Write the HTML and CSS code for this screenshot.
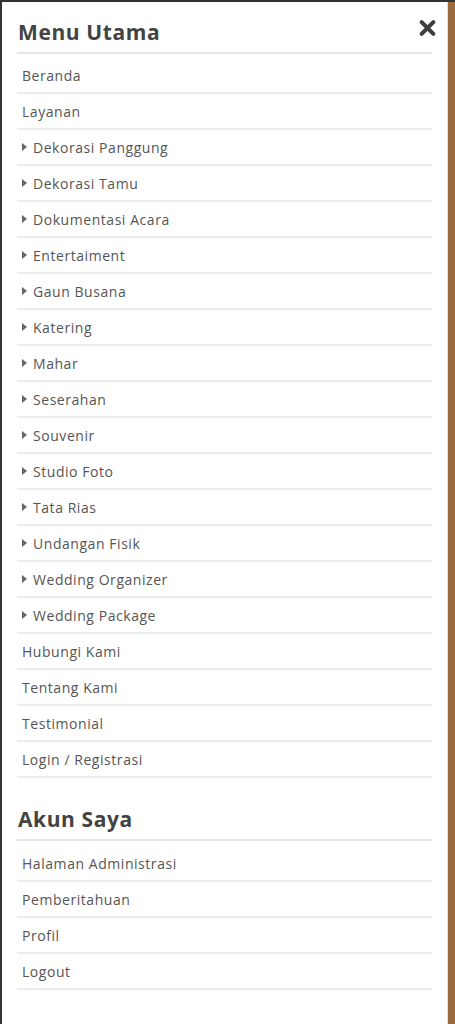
FILE: index.html
```html
<!DOCTYPE html>
<html lang="id">
<head>
<meta charset="utf-8">
<title>Menu</title>
<link rel="stylesheet" href="styles.css">
</head>
<body>
<div class="frame">
  <nav class="panel">
    <button class="close" aria-label="Tutup">
      <svg viewBox="0 0 20 20" width="19" height="18"><path d="M3.5 3.5 L16.5 16.5 M16.5 3.5 L3.5 16.5" stroke="#3d3d3d" stroke-width="4.6" stroke-linecap="round" fill="none"/></svg>
    </button>
    <section class="section">
      <h2 class="title">Menu Utama</h2>
      <ul class="list first">
        <li class="item">Beranda</li>
        <li class="item">Layanan</li>
        <li class="item sub"><span class="tri"></span>Dekorasi Panggung</li>
        <li class="item sub"><span class="tri"></span>Dekorasi Tamu</li>
        <li class="item sub"><span class="tri"></span>Dokumentasi Acara</li>
        <li class="item sub"><span class="tri"></span>Entertaiment</li>
        <li class="item sub"><span class="tri"></span>Gaun Busana</li>
        <li class="item sub"><span class="tri"></span>Katering</li>
        <li class="item sub"><span class="tri"></span>Mahar</li>
        <li class="item sub"><span class="tri"></span>Seserahan</li>
        <li class="item sub"><span class="tri"></span>Souvenir</li>
        <li class="item sub"><span class="tri"></span>Studio Foto</li>
        <li class="item sub"><span class="tri"></span>Tata Rias</li>
        <li class="item sub"><span class="tri"></span>Undangan Fisik</li>
        <li class="item sub"><span class="tri"></span>Wedding Organizer</li>
        <li class="item sub"><span class="tri"></span>Wedding Package</li>
        <li class="item">Hubungi Kami</li>
        <li class="item">Tentang Kami</li>
        <li class="item">Testimonial</li>
        <li class="item">Login / Registrasi</li>
      </ul>
    </section>
    <section class="section second">
      <h2 class="title">Akun Saya</h2>
      <ul class="list">
        <li class="item">Halaman Administrasi</li>
        <li class="item">Pemberitahuan</li>
        <li class="item">Profil</li>
        <li class="item">Logout</li>
      </ul>
    </section>
  </nav>
</div>
</body>
</html>
```
FILE: styles.css
```css
html, body {
  margin: 0;
  padding: 0;
  height: 100%;
}
body {
  background: #9b6a3f;
  font-family: "Open Sans", "Noto Sans", sans-serif;
}
.frame {
  border-top: 2px solid #333;
  min-height: 1022px;
  display: flex;
}
.panel {
  position: relative;
  box-sizing: border-box;
  width: 448px;
  flex: none;
  background: #fff;
  border-left: 2px solid #353535;
  border-right: 1px solid #e9d9cf;
  padding: 15px 15px 0 15px;
}
.close {
  position: absolute;
  top: 17px;
  right: 10px;
  background: none;
  border: 0;
  padding: 0;
  line-height: 0;
}
.title {
  margin: 0;
  font-size: 21px;
  line-height: 30px;
  font-weight: 700;
  color: #434343;
  padding: 0 0 5px 1px;
  border-bottom: 2px solid #e6e6e6;
  letter-spacing: 0.6px;
}
.second {
  margin-top: 26px;
}
.list {
  list-style: none;
  margin: 0;
  padding: 5px 0 0 0;
}
.list.first {
  padding-top: 4px;
}
.item {
  display: flex;
  align-items: center;
  height: 34px;
  padding-left: 5px;
  border-bottom: 2px solid #ececec;
  font-size: 14px;
  color: #555;
  letter-spacing: 0.55px;
}
.tri {
  width: 0;
  height: 0;
  border-top: 4px solid transparent;
  border-bottom: 4px solid transparent;
  border-left: 5px solid #666;
  margin-right: 6px;
}
```
